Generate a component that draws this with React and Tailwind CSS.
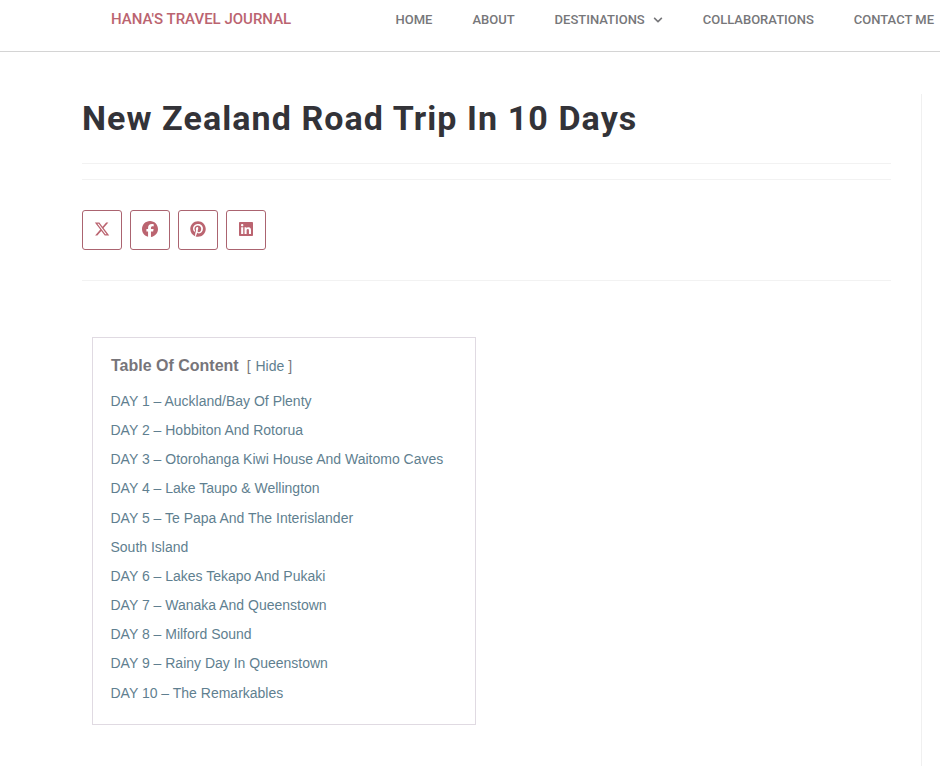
import { FaXTwitter, FaFacebook, FaPinterest, FaLinkedin } from "react-icons/fa6";
import { FaChevronDown } from "react-icons/fa";

const roboto = { fontFamily: "Roboto, sans-serif" };
const items = [
  "DAY 1 – Auckland/Bay Of Plenty",
  "DAY 2 – Hobbiton And Rotorua",
  "DAY 3 – Otorohanga Kiwi House And Waitomo Caves",
  "DAY 4 – Lake Taupo & Wellington",
  "DAY 5 – Te Papa And The Interislander",
  "South Island",
  "DAY 6 – Lakes Tekapo And Pukaki",
  "DAY 7 – Wanaka And Queenstown",
  "DAY 8 – Milford Sound",
  "DAY 9 – Rainy Day In Queenstown",
  "DAY 10 – The Remarkables",
];

function Share({ children }) {
  return (
    <a className="w-10 h-10 flex items-center justify-center border border-[#ab6470] rounded-[3px] text-[#bb6470] text-base pb-[2px]">
      {children}
    </a>
  );
}

export default function App() {
  return (
    <div className="w-[940px] h-[766px] overflow-hidden bg-white" style={roboto}>
      <header className="h-[52px] border-b border-[#d4d4d4] flex justify-between pl-[111px] pr-[6px]">
        <a className="text-[#bb6470] text-[15px] font-medium leading-[18px] pt-[10px]">HANA'S TRAVEL JOURNAL</a>
        <nav className="flex gap-10 text-[#77777a] text-[13px] font-medium leading-[14px] pt-[13px]">
          <a>HOME</a>
          <a>ABOUT</a>
          <a className="flex gap-2 h-[14px] items-center">DESTINATIONS <FaChevronDown className="text-[10px]" /></a>
          <a>COLLABORATIONS</a>
          <a>CONTACT ME</a>
        </nav>
      </header>
      <main className="ml-[82px] w-[840px] h-[714px] border-r border-[#f0f0f0] mt-[42px] pr-[30px]">
        <h1 className="text-[#333338] text-[34px] font-bold leading-10 pt-[4px] pb-[25px] tracking-[1.08px]">New Zealand Road Trip In 10 Days</h1>
        <div className="border-t border-[#f2f2f2] h-[16px]" />
        <div className="border-t border-[#f2f2f2] pt-[30px] pb-[30px] flex gap-2">
          <Share><FaXTwitter /></Share>
          <Share><FaFacebook /></Share>
          <Share><FaPinterest /></Share>
          <Share><FaLinkedin /></Share>
        </div>
        <div className="border-t border-[#f2f2f2] pt-[56px] pl-[10px]">
          <section className="w-[384px] h-[388px] border border-[#e0dae2] pl-[18px] pt-[18px]" style={{ fontFamily: '"Liberation Sans", sans-serif' }}>
            <div className="flex items-center gap-2 h-[20px]">
              <span className="text-[#77757a] text-base font-bold">Table Of Content</span>
              <span className="text-[14px] text-[#77777a]">[ <a className="text-[#5f7f90] ml-px">Hide</a> ]</span>
            </div>
            <ul className="mt-[10.78px] -ml-[0.5px] text-[14px] text-[#5f7f90]">
              {items.map((t) => (
                <li key={t} className="h-[29.2px] leading-[29px]">{t}</li>
              ))}
            </ul>
          </section>
        </div>
      </main>
    </div>
  );
}
